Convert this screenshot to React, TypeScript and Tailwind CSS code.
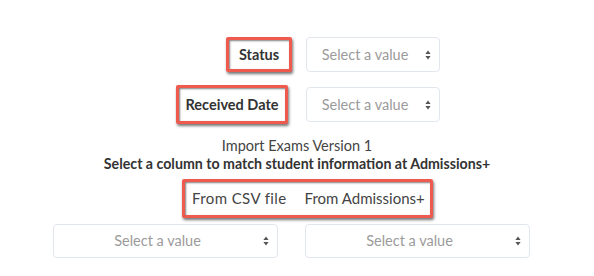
import React from "react";

const font = { fontFamily: "Lato, 'Open Sans', sans-serif" };

function Arrows() {
  return (
    <svg width="6" height="10" viewBox="0 0 6 10" className="shrink-0">
      <path d="M3 0.5 L5.6 4 L0.4 4 Z" fill="#555" />
      <path d="M3 9.5 L5.6 6 L0.4 6 Z" fill="#555" />
    </svg>
  );
}

function Select({ w, h }: { w: string; h: string }) {
  return (
    <div
      className={`${w} ${h} relative flex items-center rounded-[4px] border border-[#e2e7ee] bg-white pl-3 pr-7`}
    >
      <span className="flex-1 text-center text-[14.5px] text-[#9b9b9b]">Select a value</span>
      <div className="absolute right-[8px] top-1/2 -translate-y-1/2">
        <Arrows />
      </div>
    </div>
  );
}

function Mark({ children, className = "" }: { children: React.ReactNode; className?: string }) {
  return (
    <div
      className={`rounded-[2px] border-[3px] border-[#ef5a4f] bg-white shadow-[1px_2px_3px_rgba(0,0,0,0.55),inset_1px_1px_2px_rgba(0,0,0,0.5)] ${className}`}
    >
      {children}
    </div>
  );
}

export default function App() {
  return (
    <div className="h-[276px] w-[594px] overflow-hidden bg-white" style={font}>
      <div className="flex flex-col gap-[13px] pt-[37px]">
        <div className="flex items-center">
          <div className="flex w-[292px] justify-end">
            <Mark className="flex h-[35px] w-[66px] items-center justify-center">
              <span className="text-[14.5px] font-bold text-[#333]">Status</span>
            </Mark>
          </div>
          <div className="ml-[14px]">
            <Select w="w-[134px]" h="h-[35px]" />
          </div>
        </div>
        <div className="flex items-center">
          <div className="flex w-[288px] justify-end">
            <Mark className="flex h-[39px] w-[112px] items-center justify-center">
              <span className="text-[14.5px] font-bold text-[#333]">Received Date</span>
            </Mark>
          </div>
          <div className="ml-[18px]">
            <Select w="w-[134px]" h="h-[35px]" />
          </div>
        </div>
      </div>
      <div className="mt-[13px] text-center text-[14.5px] leading-[18px] text-[#444]">
        Import Exams Version 1
      </div>
      <div className="text-center text-[14.2px] font-bold leading-[18px] text-[#333]">
        Select a column to match student information at Admissions+
      </div>
      <div className="ml-[182px] mt-[6px]">
        <Mark className="flex h-[39px] w-[251px] items-center pl-[7px] text-[15px] text-[#444]">
          <span className="tracking-[0.4px]">From CSV file</span>
          <span className="ml-[18px]">From Admissions+</span>
        </Mark>
      </div>
      <div className="ml-[53px] mt-[6px] flex gap-[27px]">
        <Select w="w-[225px]" h="h-[34px]" />
        <Select w="w-[225px]" h="h-[34px]" />
      </div>
    </div>
  );
}
